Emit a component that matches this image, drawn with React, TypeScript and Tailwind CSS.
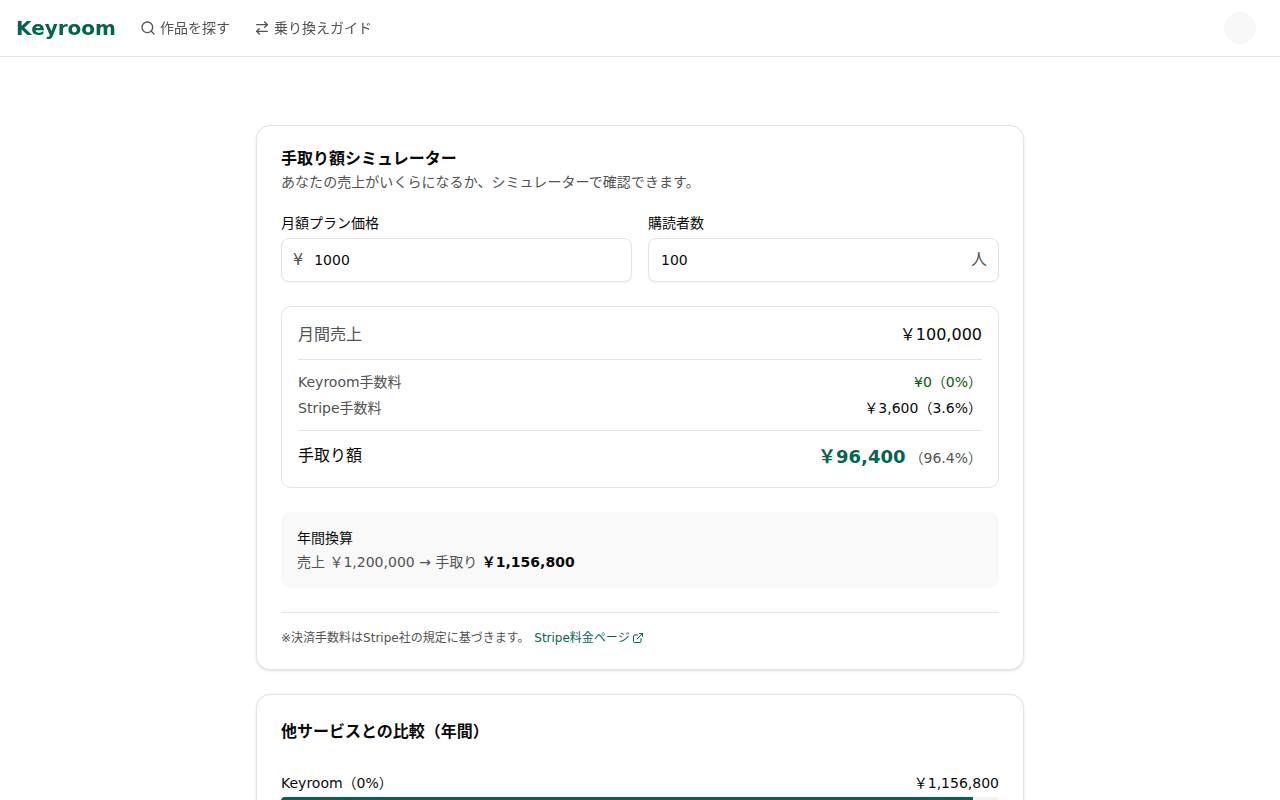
import { useState } from 'react'
import { ArrowRightLeft, ExternalLink, Search } from 'lucide-react'

const STRIPE_RATE = 0.036

const SERVICES = [
  { name: 'Keyroom（0%）', net: 0.964, barClass: 'bg-[#00664f]' },
]

const yen = (n: number) => `￥${Math.round(n).toLocaleString('en-US')}`

export default function App() {
  const [price, setPrice] = useState('1000')
  const [subscribers, setSubscribers] = useState('100')

  const monthly = Number(price) * Number(subscribers)
  const stripeFee = monthly * STRIPE_RATE
  const takeHome = monthly - stripeFee

  return (
    <div
      lang="ja"
      className="h-screen overflow-hidden bg-white text-base text-[#0a0a0a] font-['DejaVu_Sans','Noto_Sans_CJK_JP',sans-serif]"
    >
      <header className="relative z-10 border-b border-[#e4e4e4] bg-white/95 backdrop-blur">
        <div className="flex h-14 items-center pl-4 pr-6">
          <a href="#" className="text-xl font-bold text-[#00664f]">Keyroom</a>
          <nav className="ml-6 flex items-center gap-6 text-sm text-[#525252]">
            <a href="#" className="flex items-center gap-1">
              <Search className="size-4" />
              作品を探す
            </a>
            <a href="#" className="flex items-center gap-1">
              <ArrowRightLeft className="size-4" />
              乗り換えガイド
            </a>
          </nav>
          <div className="ml-auto size-8 rounded-full bg-[#f8f8f8]" />
        </div>
      </header>

      <main className="mx-auto flex max-w-3xl flex-col gap-6 pt-[68px]">
        <Card>
          <div className="flex flex-col gap-1.5">
            <h2 className="translate-y-px font-semibold leading-none">手取り額シミュレーター</h2>
            <p className="text-sm tracking-[0.05px] text-[#525252]">あなたの売上がいくらになるか、シミュレーターで確認できます。</p>
          </div>

          <div className="mt-6 grid grid-cols-2 gap-4">
            <NumberField id="price" label="月額プラン価格" prefix="¥" value={price} onChange={setPrice} />
            <NumberField id="subscribers" label="購読者数" suffix="人" value={subscribers} onChange={setSubscribers} />
          </div>

          <div className="mt-6 flex flex-col gap-3 rounded-[10px] border border-[#e4e4e4] p-4">
            <div className="flex justify-between">
              <span className="text-[#525252]">月間売上</span>
              <span>{yen(monthly)}</span>
            </div>
            <div className="h-px bg-[#e4e4e4]" />
            <div className="flex flex-col gap-1.5 text-sm">
              <div className="flex justify-between">
                <span className="text-[#525252]">Keyroom手数料</span>
                <span className="text-[#006300]">¥0（0%）</span>
              </div>
              <div className="flex justify-between">
                <span className="text-[#525252]">Stripe手数料</span>
                <span>{yen(stripeFee)}（3.6%）</span>
              </div>
            </div>
            <div className="h-px bg-[#e4e4e4]" />
            <div className="flex justify-between">
              <span className="translate-y-px">手取り額</span>
              <div className="text-right text-lg">
                <span className="font-bold text-[#00664f]">{yen(takeHome)}</span>
                <span className="ml-1 text-sm text-[#525252]">（96.4%）</span>
              </div>
            </div>
          </div>

          <div className="mt-6 flex flex-col gap-1 rounded-[10px] bg-[#f9f9f9] p-4 text-sm">
            <p>年間換算</p>
            <p className="text-[#525252]">
              売上 {yen(monthly * 12)} → 手取り{' '}
              <span className="font-semibold text-[#0a0a0a]">{yen(takeHome * 12)}</span>
            </p>
          </div>

          <div className="-mb-px mt-6 border-t border-[#e4e4e4] pt-[17px] text-xs text-[#525252]">
            ※決済手数料はStripe社の規定に基づきます。{' '}
            <a href="#" className="ml-px inline-flex items-center gap-0.5 text-[#00664f]">
              Stripe料金ページ
              <ExternalLink className="size-3" />
            </a>
          </div>
        </Card>

        <Card>
          <h2 className="translate-y-px font-semibold">他サービスとの比較（年間）</h2>
          <div className="mt-[30px] flex flex-col gap-4">
            {SERVICES.map((s) => (
              <div key={s.name} className="flex flex-col gap-1">
                <div className="flex justify-between text-sm">
                  <span>{s.name}</span>
                  <span>{yen(monthly * 12 * s.net)}</span>
                </div>
                <div className="h-3 overflow-hidden rounded bg-[#f4f4f4]">
                  <div className={`h-full ${s.barClass}`} style={{ width: `${s.net * 100}%` }} />
                </div>
              </div>
            ))}
          </div>
        </Card>
      </main>
    </div>
  )
}

function Card({ children }: { children: React.ReactNode }) {
  return (
    <section className="rounded-[14px] border border-[#e4e4e4] bg-white p-6 shadow-sm">
      {children}
    </section>
  )
}

function NumberField({
  id, label, prefix, suffix, value, onChange,
}: {
  id: string; label: string; prefix?: string; suffix?: string
  value: string; onChange: (v: string) => void
}) {
  return (
    <div className="flex flex-col gap-2">
      <label htmlFor={id} className="text-sm leading-none">{label}</label>
      <div className="flex h-11 items-center rounded-lg border border-[#e4e4e4] px-[11px] shadow-xs">
        {prefix && <span className="mr-[11px] text-[#525252]">{prefix}</span>}
        <input
          id={id}
          inputMode="numeric"
          value={value}
          onChange={(e) => onChange(e.target.value)}
          className={`min-w-0 flex-1 bg-transparent text-sm outline-none ${prefix ? '' : 'pl-px'}`}
        />
        {suffix && <span className="text-[#525252]">{suffix}</span>}
      </div>
    </div>
  )
}
